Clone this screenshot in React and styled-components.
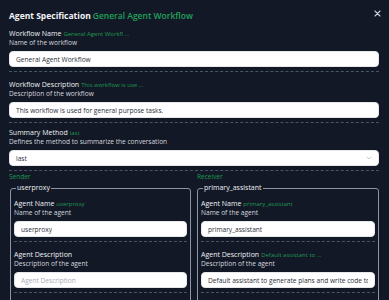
import React from "react";
import styled, { createGlobalStyle } from "styled-components";

const Global = createGlobalStyle`
  html, body { margin: 0; padding: 0; background: #121826; }
  body { font-family: "Open Sans", "Noto Sans", sans-serif; color: #e5e7eb; }
  * { box-sizing: border-box; }
`;

const Page = styled.div`
  padding: 8px 10px 0 9px;
  height: 300px;
  overflow: hidden;
`;

const Header = styled.div`
  display: flex;
  align-items: center;
  height: 14px;
  margin-bottom: 7px;
`;

const Title = styled.div`
  display: flex;
  align-items: baseline;
  font-size: 8.5px;
  font-weight: 700;
  color: #f3f4f6;
  flex: 1;
  white-space: nowrap;
`;

const Green = styled.span`
  color: ${p => (p.$strong ? "#22a35a" : "#1f9a52")};
  font-size: ${p => p.$size || "6px"};
  font-weight: ${p => (p.$strong ? 600 : 400)};
  margin-left: 2px;
  line-height: 1;
`;

const Close = styled.button`
  border: 0;
  background: none;
  padding: 0;
  width: 10px;
  height: 10px;
  display: flex;
  align-items: center;
  justify-content: center;
  margin-right: -3px;
  margin-top: -4px;
`;

const Field = styled.div`
  padding-bottom: 4px;
  border-bottom: 1px dashed #4a5466;
  margin-bottom: ${p => p.$mb || "8px"};
`;

const Label = styled.div`
  display: flex;
  align-items: baseline;
  height: 10px;
  font-size: 7px;
  line-height: 10px;
  color: #eef0f4;
  white-space: nowrap;
  overflow: hidden;
`;

const Desc = styled.div`
  font-size: 6.6px;
  line-height: 8px;
  height: 8px;
  color: #d4d7de;
  margin-bottom: 4px;
  white-space: nowrap;
`;

const Input = styled.div`
  height: 16px;
  background: #fff;
  border-radius: 4px;
  border: 1px solid #e5e7eb;
  padding: 0 6px;
  display: flex;
  align-items: center;
  justify-content: space-between;
  font-size: 6.6px;
  color: ${p => (p.$placeholder ? "#a8adb7" : "#2b2f38")};
  white-space: nowrap;
  overflow: hidden;
`;

const InputText = styled.span`
  overflow: hidden;
  min-width: 0;
`;

const Columns = styled.div`
  display: grid;
  grid-template-columns: minmax(0, 1fr) minmax(0, 1fr);
  column-gap: 6px;
`;

const Column = styled.div`
  display: flex;
  flex-direction: column;
  min-width: 0;
`;

const ColTitle = styled.div`
  font-size: 6.5px;
  line-height: 10px;
  color: #1f9a52;
  margin-bottom: 2px;
`;

const Fieldset = styled.fieldset`
  margin: 0 0 0 ${p => (p.$left ? "1px" : "0")};
  border: 1px solid #8d94a3;
  border-radius: 3px;
  padding: 7px 3px 0 3px;
  min-width: 0;
`;

const Legend = styled.legend`
  font-size: 7px;
  color: #eef0f4;
  padding: 0 1px;
  margin-left: 2px;
  line-height: 8px;
`;

function FormField({ label, value, desc, text, placeholder, mb, select }) {
  return (
    <Field $mb={mb}>
      <Label>
        {label}
        {value && <Green>{value}</Green>}
      </Label>
      <Desc>{desc}</Desc>
      <Input $placeholder={!!placeholder}>
        <InputText>{text || placeholder}</InputText>
        {select && (
          <svg width="6" height="4" viewBox="0 0 6 4">
            <path d="M0.8 0.8 L3 3 L5.2 0.8" fill="none" stroke="#b6bac3" strokeWidth="0.8" />
          </svg>
        )}
      </Input>
    </Field>
  );
}

export default function App() {
  return (
    <>
      <Global />
      <Page>
        <Header>
          <Title>
            Agent Specification
            <Green $strong $size="8.5px">General Agent Workflow</Green>
          </Title>
          <Close aria-label="close">
            <svg width="7" height="7" viewBox="0 0 7 7">
              <path d="M1 1 L6 6 M6 1 L1 6" stroke="#c9ceda" strokeWidth="1.1" strokeLinecap="round" />
            </svg>
          </Close>
        </Header>

        <FormField
          label="Workflow Name"
          value="General Agent Workfl ..."
          desc="Name of the workflow"
          text="General Agent Workflow"
        />
        <FormField
          label="Workflow Description"
          value="This workflow is use ..."
          desc="Description of the workflow"
          text="This workflow is used for general purpose tasks."
          mb="5px"
        />
        <FormField
          label="Summary Method"
          value="last"
          desc="Defines the method to summarize the conversation"
          text="last"
          select
          mb="1px"
        />

        <Columns>
          <Column>
            <ColTitle>Sender</ColTitle>
            <Fieldset $left>
              <Legend>userproxy</Legend>
              <FormField
                label="Agent Name"
                value="userproxy"
                desc="Name of the agent"
                text="userproxy"
              />
              <FormField
                label="Agent Description"
                desc="Description of the agent"
                placeholder="Agent Description"
              />
              <FormField
                label="Max Consecutive Auto Reply"
                desc="Max consecutive auto reply messages"
                text="10"
              />
            </Fieldset>
          </Column>
          <Column>
            <ColTitle>Receiver</ColTitle>
            <Fieldset>
              <Legend>primary_assistant</Legend>
              <FormField
                label="Agent Name"
                value="primary_assistant"
                desc="Name of the agent"
                text="primary_assistant"
              />
              <FormField
                label="Agent Description"
                value="Default assistant to ..."
                desc="Description of the agent"
                text="Default assistant to generate plans and write code to solve tasks."
              />
              <FormField
                label="Max Consecutive Auto Reply"
                desc="Max consecutive auto reply messages"
                text="15"
              />
            </Fieldset>
          </Column>
        </Columns>
      </Page>
    </>
  );
}
